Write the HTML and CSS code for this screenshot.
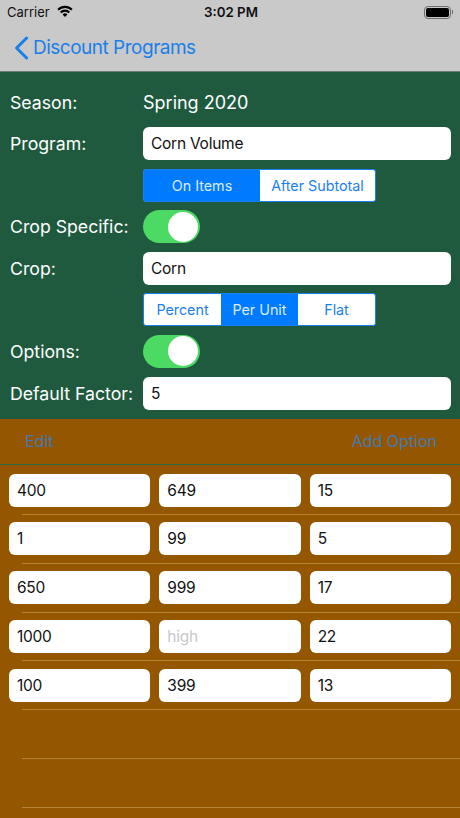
FILE: index.html
```html
<!DOCTYPE html>
<html lang="en">
<head>
<meta charset="utf-8">
<title>Discount Programs</title>
<link rel="stylesheet" href="styles.css">
</head>
<body>
<div class="screen">
  <header class="top">
    <div class="status">
      <div class="status-left">
        <span>Carrier</span>
        <svg class="wifi" viewBox="0 0 16 12" aria-hidden="true"><path d="M8 12 5.6 9.4a3.4 3.4 0 0 1 4.8 0Z"/><path d="M4.4 8.2 3 6.7a7 7 0 0 1 10 0l-1.4 1.5a5 5 0 0 0-7.2 0Z"/><path d="M1.8 5.5.4 4a10.8 10.8 0 0 1 15.2 0l-1.4 1.5a8.8 8.8 0 0 0-12.4 0Z"/></svg>
      </div>
      <div class="time">3:02 PM</div>
      <div class="status-right">
        <div class="battery"><div class="battery-fill"></div></div>
        <div class="battery-tip"></div>
      </div>
    </div>
    <nav class="nav">
      <svg class="back" viewBox="0 0 15 24" aria-hidden="true"><path d="M12.6 2 2.6 12l10 10"/></svg>
      <span>Discount Programs</span>
    </nav>
  </header>

  <section class="form">
    <div class="row"><div class="label">Season:</div><div class="value">Spring 2020</div></div>
    <div class="row"><div class="label">Program:</div><div class="field">Corn Volume</div></div>
    <div class="row"><div class="label"></div>
      <div class="seg">
        <div class="seg-item on w-a">On Items</div>
        <div class="seg-item w-b">After Subtotal</div>
      </div>
    </div>
    <div class="row"><div class="label">Crop Specific:</div><div class="switch"><div class="knob"></div></div></div>
    <div class="row"><div class="label">Crop:</div><div class="field">Corn</div></div>
    <div class="row"><div class="label"></div>
      <div class="seg">
        <div class="seg-item w-c">Percent</div>
        <div class="seg-item on w-c">Per Unit</div>
        <div class="seg-item w-c">Flat</div>
      </div>
    </div>
    <div class="row"><div class="label">Options:</div><div class="switch"><div class="knob"></div></div></div>
    <div class="row row-last"><div class="label">Default Factor:</div><div class="field">5</div></div>
  </section>

  <section class="options">
    <div class="toolbar"><span>Edit</span><span>Add Option</span></div>
    <div class="table">
      <div class="cell-row"><div class="field">400</div><div class="field">649</div><div class="field">15</div></div>
      <div class="cell-row"><div class="field">1</div><div class="field">99</div><div class="field">5</div></div>
      <div class="cell-row"><div class="field">650</div><div class="field">999</div><div class="field">17</div></div>
      <div class="cell-row"><div class="field">1000</div><div class="field placeholder">high</div><div class="field">22</div></div>
      <div class="cell-row"><div class="field">100</div><div class="field">399</div><div class="field">13</div></div>
      <div class="cell-row"></div>
      <div class="cell-row"></div>
    </div>
  </section>
</div>
</body>
</html>
```
FILE: styles.css
```css
* { box-sizing: border-box; }
html, body { margin: 0; padding: 0; }
body { font-family: Inter, "Liberation Sans", sans-serif; }

.screen {
  width: 460px;
  height: 818px;
  overflow: hidden;
  display: flex;
  flex-direction: column;
  background: #955600;
}

.top {
  height: 72px;
  background: #c9c9c9;
  border-bottom: 1px solid #6f7a74;
}
.status {
  height: 24px;
  padding: 0 7px 0 7px;
  display: flex;
  align-items: center;
  justify-content: space-between;
  position: relative;
  color: #111;
  font-size: 13px;
}
.status-left { display: flex; align-items: center; gap: 7px; }
.wifi { width: 16px; height: 12px; fill: #000; margin-bottom: 3px; }
.time { font-weight: 600; font-size: 13.3px; position: absolute; left: 2px; right: 0; text-align: center; }
.status-right { display: flex; align-items: center; gap: 1px; }
.battery {
  width: 27px;
  height: 13px;
  border: 1px solid #6d6d6d;
  border-radius: 4px;
  padding: 1px;
}
.battery-fill { width: 100%; height: 100%; background: #000; border-radius: 2px; }
.battery-tip { width: 1px; height: 4px; background: #6d6d6d; }

.nav {
  height: 47px;
  display: flex;
  align-items: center;
  gap: 4px;
  padding: 0 0 0 14px;
  color: #1a7fe8;
  font-size: 19px;
  letter-spacing: -0.5px;
}
.back { width: 15px; height: 24px; fill: none; stroke: #1a7fe8; stroke-width: 3; stroke-linecap: round; stroke-linejoin: round; }

.form {
  height: 347px;
  background: #1f5a3f;
  padding: 13.5px 9px 0 10px;
  display: flex;
  flex-direction: column;
  gap: 8.5px;
}
.row { display: flex; align-items: center; height: 33px; flex: none; color: #fff; font-size: 17.7px; }
.row-last { margin-top: 1px; }
.label { width: 133px; flex: none; }
.value { font-size: 18px; }

.field {
  flex: 1;
  min-width: 0;
  height: 33px;
  line-height: 33px;
  background: #fff;
  border-radius: 6px;
  padding: 0 8px;
  color: #111;
  font-size: 15.5px;
  letter-spacing: -0.25px;
}
.placeholder { color: #c8c8cc; }

.seg {
  display: flex;
  width: 233px;
  height: 33px;
  background: #fff;
  border: 1px solid #1a80f0;
  border-radius: 3px;
  color: #1a80f0;
  font-size: 14.3px;
}
.seg-item { display: flex; align-items: center; justify-content: center; }
.seg-item.on { background: #007aff; color: #dcecff; }
.w-a { width: 116px; }
.w-b { flex: 1; }
.w-c { flex: 1; }

.switch {
  width: 57px;
  height: 33px;
  border-radius: 17px;
  background: #4cd964;
  display: flex;
  align-items: center;
  justify-content: flex-end;
  padding-right: 2px;
}
.knob { width: 30px; height: 30px; border-radius: 50%; background: #fff; }

.options { flex: 1; display: flex; flex-direction: column; }
.toolbar {
  height: 46px;
  flex: none;
  border-bottom: 1px solid #2c6a3e;
  padding: 0 23px 2px 25px;
  display: flex;
  align-items: center;
  justify-content: space-between;
  color: #4379b0;
  font-size: 16px;
}
.table { margin-top: 1px; }
.cell-row {
  height: 48.85px;
  display: flex;
  gap: 9px;
  align-items: flex-start;
  padding: 7.5px 9px 0 9px;
  position: relative;
}
.cell-row::after {
  content: "";
  position: absolute;
  left: 22px;
  right: 0;
  bottom: 0;
  height: 1px;
  background: #b58238;
}
```
